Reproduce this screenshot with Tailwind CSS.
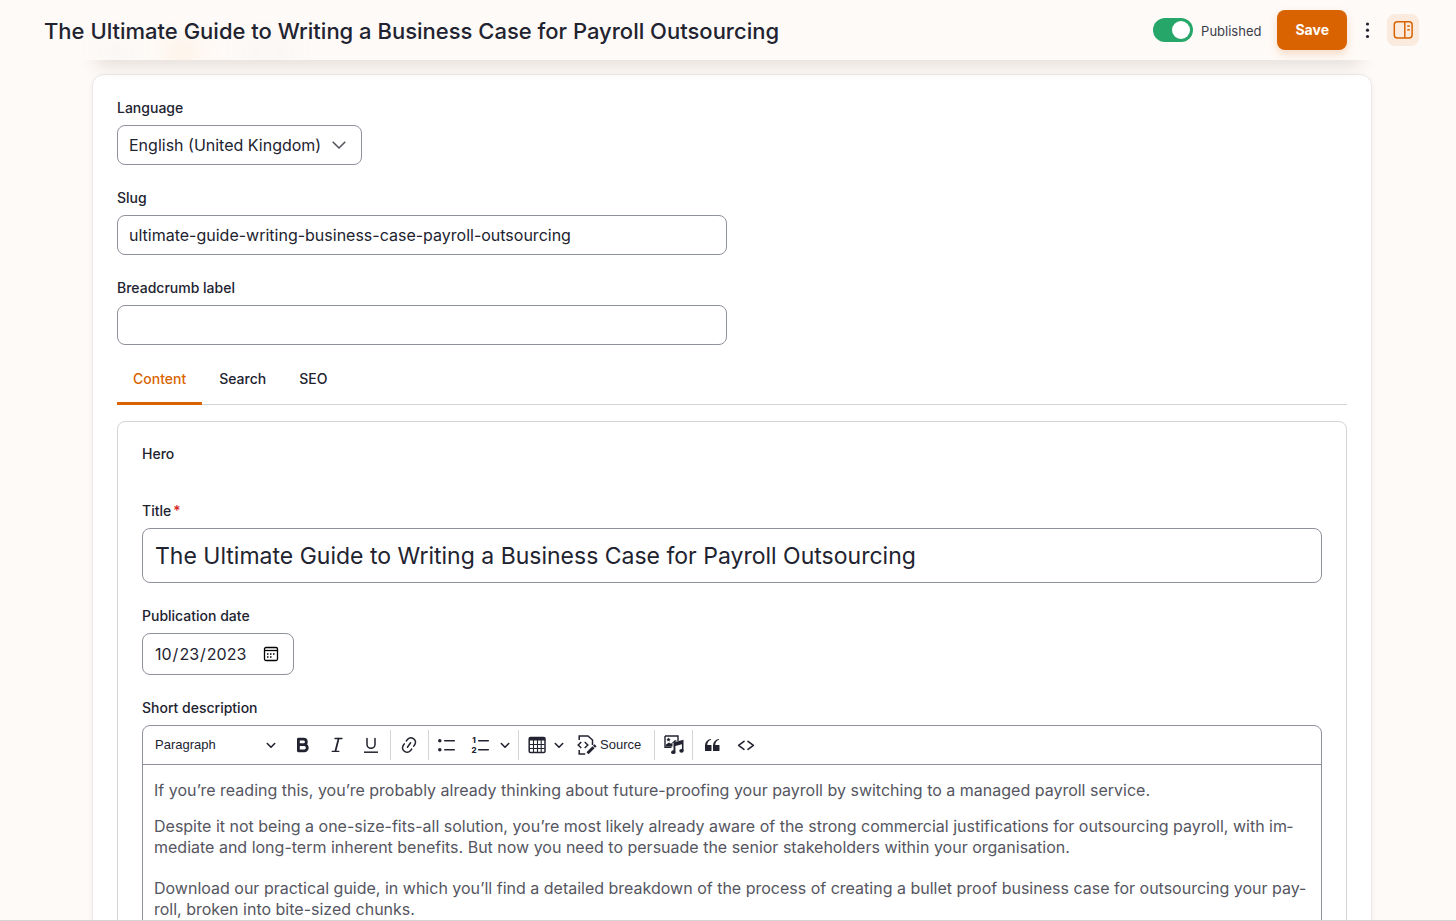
<!DOCTYPE html>
<html lang="en">
<head>
    <meta charset="UTF-8">
    <meta name="viewport" content="width=device-width, initial-scale=1.0">
    <title>Edit: The Ultimate Guide to Writing a Business Case for Payroll Outsourcing</title>
    <script src="https://cdn.jsdelivr.net/npm/@tailwindcss/browser@4"></script>
</head>
<body class="flex h-screen flex-col overflow-hidden border-b border-[#d4d4d8] bg-[#fefaf7] font-['Inter',sans-serif] text-[#222330]">
    <!-- Sticky header -->
    <header class="relative z-10 h-[60px] shrink-0">
        <div class="absolute inset-x-[96px] bottom-0 h-4 shadow-[0_4px_18px_rgba(60,40,30,0.16)]"></div>
        <div class="relative flex h-full items-center overflow-hidden bg-[#fefaf7] pl-11 pr-[37px]">
            <div class="absolute left-[96px] top-[42px] h-4 w-10 bg-slate-400/5 blur-md"></div>
            <div class="absolute left-[168px] top-[42px] h-5 w-7 bg-orange-400/10 blur-md"></div>
            <div class="absolute left-[240px] top-[42px] h-4 w-14 bg-slate-400/5 blur-md"></div>
            <h1 class="relative flex-1 pt-0.5 text-[22px] font-medium leading-8">The Ultimate Guide to Writing a Business Case for Payroll Outsourcing</h1>
            <div class="relative flex items-center">
                <input type="checkbox" id="published" checked class="h-6 w-10 appearance-none rounded-full bg-[#26a769] p-[3px] before:ml-4 before:block before:size-[18px] before:rounded-full before:bg-white">
                <label for="published" class="ml-2 pt-0.5 text-[13px] leading-5 text-[#3c3d4a]">Published</label>
                <button type="button" class="ml-4 h-10 rounded-lg bg-[#d96300] px-[18px] text-sm font-bold text-white shadow-[0_4px_8px_rgba(217,99,0,0.2)]">Save</button>
                <button type="button" aria-label="More actions" class="flex h-8 w-10 items-center justify-center">
                    <svg class="size-5" viewBox="0 0 20 20" fill="#222330"><circle cx="10.500" cy="4" r="1.6"/><circle cx="10.500" cy="10.200" r="1.6"/><circle cx="10.500" cy="16.500" r="1.6"/></svg>
                </button>
                <button type="button" aria-label="Toggle sidebar" class="flex size-8 items-center justify-center rounded-lg bg-[#faebde]">
                    <svg class="size-5" viewBox="0 0 20 20" fill="none" stroke="#d96300" stroke-width="1.5"><rect x="1.300" y="1.700" width="17.800" height="16.300" rx="3"/><path d="M11.800 1.700v16.300M14.300 6h2.500M14.300 9.700h2.500"/></svg>
                </button>
            </div>
        </div>
    </header>

    <!-- Edit form -->
    <main class="pl-2 pt-[14px]">
        <form class="mx-auto max-w-[1280px] rounded-xl border border-[#ebe8e8] bg-white p-6 shadow-[0_2px_6px_rgba(60,40,30,0.06)]">
            <div class="flex flex-col gap-6">
                <div>
                    <label for="language" class="mb-2 block text-sm/[18px] font-medium">Language</label>
                    <div class="relative w-[245px]">
                        <select id="language" class="h-10 w-full appearance-none rounded-lg border border-[#8e929c] bg-white px-[11px] text-base">
                            <option>English (United Kingdom)</option>
                        </select>
                        <svg class="pointer-events-none absolute right-[15px] top-3 size-4" viewBox="0 0 16 16" fill="none" stroke="#545560" stroke-width="1.600" stroke-linecap="round" stroke-linejoin="round"><path d="M2.200 5.200 8 11l5.800-5.800"/></svg>
                    </div>
                </div>
                <div>
                    <label for="slug" class="mb-2 block text-sm/[18px] font-medium">Slug</label>
                    <input id="slug" type="text" value="ultimate-guide-writing-business-case-payroll-outsourcing" class="block h-10 w-full max-w-[610px] rounded-lg border border-[#8e929c] px-[11px] text-base">
                </div>
                <div>
                    <label for="breadcrumb" class="mb-2 block text-sm/[18px] font-medium">Breadcrumb label</label>
                    <input id="breadcrumb" type="text" class="block h-10 w-full max-w-[610px] rounded-lg border border-[#8e929c] px-[11px] text-base">
                </div>
            </div>

            <!-- Tabs -->
            <nav class="mt-3 flex h-12 gap-px text-sm font-medium shadow-[inset_0_-1px_0_#d4d4d8]">
                <a href="#content" class="flex items-center border-b-3 border-[#d96300] px-4 pb-0.5 text-[#d96300]">Content</a>
                <a href="#search" class="flex items-center border-b-3 border-transparent px-4 pb-0.5">Search</a>
                <a href="#seo" class="flex items-center border-b-3 border-transparent px-4 pb-0.5">SEO</a>
            </nav>

            <section class="mt-4 rounded-lg border border-[#d4d4d8] p-6">
                <h2 class="mb-10 text-sm/4 font-medium">Hero</h2>

                <div class="flex flex-col gap-6">
                    <div>
                        <label for="title" class="mb-2 block text-sm/[18px] font-medium">Title<span class="ml-0.5 align-top text-[#d72222]">*</span></label>
                        <input id="title" type="text" value="The Ultimate Guide to Writing a Business Case for Payroll Outsourcing" class="block h-[55px] w-full rounded-lg border border-[#8e929c] px-3 text-[23px] font-normal">
                    </div>
                    <div>
                        <label for="date" class="mb-2 block text-sm/[18px] font-medium">Publication date</label>
                        <div class="relative w-[152px]">
                            <input id="date" type="date" value="2023-10-23" class="block h-[42px] w-full rounded-lg border border-[#8e929c] px-[11px] text-base [&::-webkit-calendar-picker-indicator]:opacity-0">
                            <svg class="pointer-events-none absolute right-[15px] top-[13px] size-4" viewBox="0 0 16 16" fill="none" stroke="#000"><rect x="1.500" y="1.500" width="13" height="13" rx="1.500" stroke-width="1.300"/><path d="M1.500 4.500h13" stroke-width="1.300"/><path d="M7 8h1.500M10 8h1.500M4 8h1.500M4 11h1.500M7 11h1.500" stroke-width="1.500"/></svg>
                        </div>
                    </div>
                    <div>
                        <p id="description-label" class="mb-2 text-sm/[18px] font-medium">Short description</p>
                        <div class="rounded-lg border border-[#8e929c]">
                            <!-- Editor toolbar -->
                            <div role="toolbar" class="flex h-[39px] items-center border-b border-[#8e929c]">
                                <button type="button" class="flex h-8 w-[143px] items-center justify-between pl-3 pr-2.5 font-['Liberation_Sans',sans-serif] text-[13px]">Paragraph
                                    <svg class="size-2.5" viewBox="0 0 10 10" fill="none" stroke="#222330" stroke-width="1.600" stroke-linecap="round" stroke-linejoin="round"><path d="M1.300 3.500 5 7.200l3.700-3.700"/></svg>
                                </button>
                                <button type="button" aria-label="Bold" class="flex h-8 w-[34px] items-center justify-center">
                                    <svg class="size-5" viewBox="0 0 20 20" fill="none" stroke="#222330" stroke-width="2.800" stroke-linejoin="round"><path d="M5.400 4.200h5.200a2.700 2.700 0 0 1 0 5.400H5.400zM5.400 9.600h5.800a3 3 0 0 1 0 6.200H5.400z"/></svg>
                                </button>
                                <button type="button" aria-label="Italic" class="flex h-8 w-[34px] items-center justify-center">
                                    <svg class="size-5" viewBox="0 0 20 20" fill="none" stroke="#222330" stroke-width="1.300" stroke-linecap="round"><path d="M8 3.500h7M5.200 16.400h6.600"/><path d="M11.600 3.600 8.400 16.200" stroke-width="1.800"/></svg>
                                </button>
                                <button type="button" aria-label="Underline" class="flex h-8 w-[34px] items-center justify-center">
                                    <svg class="size-5" viewBox="0 0 20 20" fill="none" stroke="#222330" stroke-width="1.500"><path d="M3 17.200h14"/><path d="M6 3.600V9.500a4 3.800 0 0 0 8 0V3.600" stroke-linecap="round"/></svg>
                                </button>
                                <span class="ml-0.5 mr-px h-[30px] w-px bg-[#d4d4d8]"></span>
                                <button type="button" aria-label="Link" class="flex h-8 w-[34px] items-center justify-center">
                                    <svg class="size-5" viewBox="0 0 20 20" fill="#222330"><path d="m11.077 15 .991-1.416a.75.75 0 1 1 1.229.86l-1.148 1.640a.748.748 0 0 1-.217.206 5.251 5.251 0 0 1-8.503-5.955.741.741 0 0 1 .12-.274l1.147-1.639a.75.75 0 1 1 1.228.86L4.933 10.700l.006.003a3.750 3.750 0 0 0 6.132 4.294l.006.004zm5.494-5.335a.748.748 0 0 1-.12.274l-1.147 1.639a.75.75 0 1 1-1.228-.86l.86-1.230a3.750 3.750 0 0 0-6.144-4.301l-.86 1.229a.75.75 0 0 1-1.229-.86l1.148-1.640a.748.748 0 0 1 .217-.206 5.251 5.251 0 0 1 8.503 5.955zm-4.563-2.532a.75.75 0 0 1 .184 1.045l-3.155 4.505a.75.75 0 1 1-1.229-.86l3.155-4.506a.75.75 0 0 1 1.045-.184z"/></svg>
                                </button>
                                <span class="ml-0.5 mr-px h-[30px] w-px bg-[#d4d4d8]"></span>
                                <button type="button" aria-label="Bulleted list" class="flex h-8 w-[34px] items-center justify-center">
                                    <svg class="size-5" viewBox="0 0 20 20" fill="#222330" stroke="#222330" stroke-width="1.500" stroke-linecap="round"><path d="M7.700 5.700h9.600M7.700 14.700h9.600"/><circle cx="2.800" cy="5.700" r="1"/><circle cx="2.800" cy="14.700" r="1"/></svg>
                                </button>
                                <button type="button" aria-label="Numbered list" class="flex h-8 w-[34px] items-center justify-center">
                                    <svg class="size-5" viewBox="0 0 20 20" fill="#222330"><path d="M7.700 5.700h9.600M7.700 14.700h9.600" stroke="#222330" stroke-width="1.500" stroke-linecap="round"/><text x="1.200" y="8.200" font-size="8" font-weight="800">1</text><text x="0.600" y="17.700" font-size="8" font-weight="800">2</text></svg>
                                </button>
                                <button type="button" aria-label="List options" class="flex h-8 w-[18px] items-center pl-0.5">
                                    <svg class="size-2.5" viewBox="0 0 10 10" fill="none" stroke="#222330" stroke-width="1.600" stroke-linecap="round" stroke-linejoin="round"><path d="M1.300 3.500 5 7.200l3.700-3.700"/></svg>
                                </button>
                                <span class="ml-0.5 mr-px h-[30px] w-px bg-[#d4d4d8]"></span>
                                <button type="button" aria-label="Insert table" class="flex h-8 w-[34px] items-center justify-center">
                                    <svg class="size-5" viewBox="0 0 20 20" fill="none" stroke="#222330"><rect x="2.200" y="2.500" width="15.800" height="15" rx="1.300" stroke-width="1.500"/><path d="M2 4h16" stroke-width="3"/><path d="M6.500 5v12M10.500 5v12M14.200 5v12" stroke-width="1.100"/><path d="M2.500 9.500h15M2.500 13.500h15" stroke-width="1.100"/></svg>
                                </button>
                                <button type="button" aria-label="Table options" class="flex h-8 w-[18px] items-center">
                                    <svg class="size-2.5" viewBox="0 0 10 10" fill="none" stroke="#222330" stroke-width="1.600" stroke-linecap="round" stroke-linejoin="round"><path d="M1.300 3.500 5 7.200l3.700-3.700"/></svg>
                                </button>
                                <button type="button" class="flex h-8 w-20 items-center gap-[3px] pl-[5px] font-['Liberation_Sans',sans-serif] text-[13px]">
                                    <svg class="size-5 shrink-0" viewBox="0 0 20 20" fill="none" stroke="#222330" stroke-width="1.500"><path d="M2.200 5V.900H11L15.500 5v5M2.200 15v4h6"/><path d="M4.300 7 1.200 10l3.100 3M7.700 7l3.100 3-3.100 3"/><path d="m10.500 18.300 6-6" stroke-width="3"/><path d="m17 11.800 1.500-1.500" stroke-width="3"/></svg>Source
                                </button>
                                <span class="ml-0.5 mr-0.5 h-[30px] w-px bg-[#d4d4d8]"></span>
                                <button type="button" aria-label="Insert media" class="flex h-8 w-[34px] items-center justify-center">
                                    <svg class="size-5" viewBox="0 0 20 20" fill="#222330"><path d="M1 1h13v5M7.500 12.300H1V1" fill="none" stroke="#222330" stroke-width="1.400"/><path d="m4.500 2.500.7 1.300 1.500.2-1.100 1 .3 1.500-1.400-.7-1.300.7.200-1.500-1-1 1.400-.2zM2 11.500V9.500l3-2 2 1.300L11 5l2 1-4.500 2v3.500zM9.500 7.500 19.500 4.800v11h-1.600V9.200l-6.500 1.700V17H9.500z"/><ellipse cx="9.300" cy="17.200" rx="2.200" ry="1.900"/><ellipse cx="17.500" cy="15.800" rx="2.200" ry="1.900"/></svg>
                                </button>
                                <span class="ml-px mr-0.5 h-[30px] w-px bg-[#d4d4d8]"></span>
                                <button type="button" aria-label="Block quote" class="flex h-8 w-[34px] items-center justify-center">
                                    <svg class="size-5" viewBox="0 0 20 20" fill="#222330"><path d="M3 10.423a6.500 6.500 0 0 1 6.056-6.408l.038.67C6.448 5.423 5.354 7.663 5.220 10H9c.552 0 .5.432.5.986v4.511c0 .554-.448.503-1 .503h-5c-.552 0-.5-.449-.5-1.003v-4.574zm8 0a6.500 6.500 0 0 1 6.056-6.408l.038.67c-2.646.739-3.740 2.979-3.873 5.315H17c.552 0 .5.432.5.986v4.511c0 .554-.448.503-1 .503h-5c-.552 0-.5-.449-.5-1.003v-4.574z"/></svg>
                                </button>
                                <button type="button" aria-label="Code" class="flex h-8 w-[34px] items-center justify-center">
                                    <svg class="size-5" viewBox="0 0 20 20" fill="none" stroke="#222330" stroke-width="1.600" stroke-linecap="round" stroke-linejoin="round"><path d="M8 6.300 2.600 10.300 8 14.300M12 6.300l5.400 4-5.400 4"/></svg>
                                </button>
                            </div>
                            <div role="textbox" aria-labelledby="description-label" contenteditable="true" class="px-[11px] pb-4 pt-[15px] text-base/[21px] text-[#55565f]">
                                <p class="mb-[15px]">If you’re reading this, you’re probably already thinking about future-proofing your payroll by switching to a managed payroll service.</p>
                                <p class="mb-5">Despite it not being a one-size-fits-all solution, you’re most likely already aware of the strong commercial justifications for outsourcing payroll, with im&shy;mediate and long-term inherent benefits. But now you need to persuade the senior stakeholders within your organisation.</p>
                                <p>Download our practical guide, in which you’ll find a detailed breakdown of the process of creating a bullet proof business case for outsourcing your pay&shy;roll, broken into bite-sized chunks.</p>
                            </div>
                        </div>
                    </div>
                </div>
            </section>
        </form>
    </main>
</body>
</html>
